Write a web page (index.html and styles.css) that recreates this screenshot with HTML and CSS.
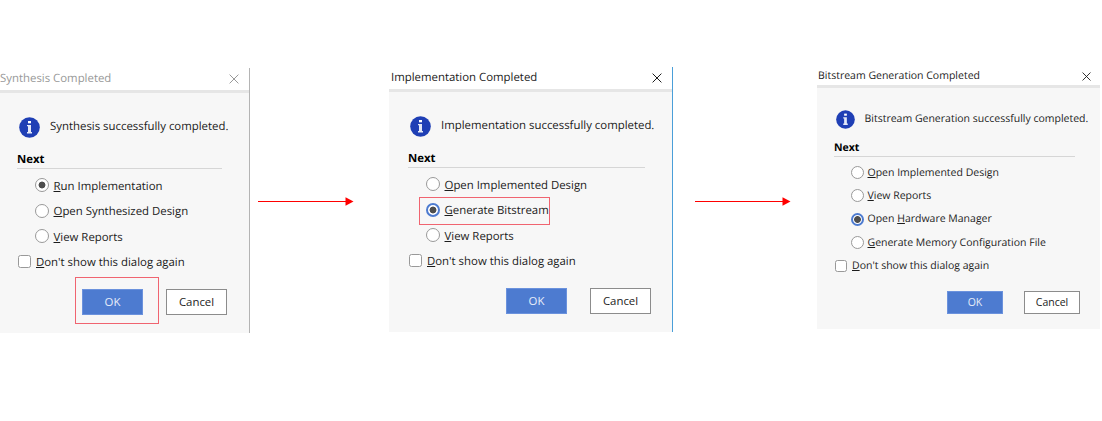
FILE: index.html
```html
<!DOCTYPE html>
<html lang="en">
<head>
<meta charset="utf-8">
<title>Vivado flow dialogs</title>
<link rel="stylesheet" href="styles.css">
</head>
<body>
<svg width="0" height="0" class="defs">
  <symbol id="info" viewBox="0 0 21 21"><circle cx="10.5" cy="10.5" r="10.3" fill="#1f3fb5"/><rect x="9" y="4" width="3" height="2.3" fill="#fff"/><path d="M8 8h4v7h1v1.500H8V15H9V9.300H8z" fill="#e4e9f8"/></symbol>
  <symbol id="close" viewBox="0 0 10 10"><path d="M.6.6l8.800 8.800M9.400.6L.6 9.400" fill="none" stroke="currentColor" stroke-width="1"/></symbol>
  <symbol id="arrow" viewBox="0 0 96 10"><path d="M0 5.500h89" stroke="#f00" stroke-width="1"/><path d="M87.500 1.300L95.500 5.500L87.500 9.700z" fill="#f00"/></symbol>
</svg>
<main class="stage">
  <section class="dialog synthesis">
    <header class="titlebar"><span>Synthesis Completed</span><svg class="close"><use href="#close"/></svg></header>
    <div class="body">
      <div class="message"><svg class="info"><use href="#info"/></svg><span>Synthesis successfully completed.</span></div>
      <h2 class="next">Next</h2>
      <div class="options">
        <label class="option"><i class="radio checked"></i><span><u>R</u>un Implementation</span></label>
        <label class="option"><i class="radio"></i><span><u>O</u>pen Synthesized Design</span></label>
        <label class="option"><i class="radio"></i><span><u>V</u>iew Reports</span></label>
      </div>
      <label class="again"><i class="checkbox"></i><span><u>D</u>on't show this dialog again</span></label>
      <div class="buttons"><button class="ok">OK<span class="mark mark-ok"></span></button><button class="cancel">Cancel</button></div>
    </div>
  </section>
  <svg class="arrow first"><use href="#arrow"/></svg>
  <section class="dialog implementation">
    <header class="titlebar"><span>Implementation Completed</span><svg class="close"><use href="#close"/></svg></header>
    <div class="body">
      <div class="message"><svg class="info"><use href="#info"/></svg><span>Implementation successfully completed.</span></div>
      <h2 class="next">Next</h2>
      <div class="options">
        <label class="option"><i class="radio"></i><span><u>O</u>pen Implemented Design</span></label>
        <label class="option"><i class="radio checked focus"></i><span><u>G</u>enerate Bitstream</span><span class="mark mark-option"></span></label>
        <label class="option"><i class="radio"></i><span><u>V</u>iew Reports</span></label>
      </div>
      <label class="again"><i class="checkbox"></i><span><u>D</u>on't show this dialog again</span></label>
      <div class="buttons"><button class="ok">OK</button><button class="cancel">Cancel</button></div>
    </div>
  </section>
  <svg class="arrow second"><use href="#arrow"/></svg>
  <section class="dialog bitstream">
    <header class="titlebar"><span>Bitstream Generation Completed</span><svg class="close"><use href="#close"/></svg></header>
    <div class="body">
      <div class="message"><svg class="info"><use href="#info"/></svg><span>Bitstream Generation successfully completed.</span></div>
      <h2 class="next">Next</h2>
      <div class="options">
        <label class="option"><i class="radio"></i><span><u>O</u>pen Implemented Design</span></label>
        <label class="option"><i class="radio"></i><span><u>V</u>iew Reports</span></label>
        <label class="option"><i class="radio checked focus"></i><span>Open <u>H</u>ardware Manager</span></label>
        <label class="option"><i class="radio"></i><span><u>G</u>enerate Memory Configuration File</span></label>
      </div>
      <label class="again"><i class="checkbox"></i><span><u>D</u>on't show this dialog again</span></label>
      <div class="buttons"><button class="ok">OK</button><button class="cancel">Cancel</button></div>
    </div>
  </section>
</main>
</body>
</html>
```
FILE: styles.css
```css
* { box-sizing: border-box; }
body { margin: 0; background: #fff; overflow: hidden; }
.defs { display: block; }
.stage { display: flex; align-items: flex-start; height: 421px; padding-top: 67px; }

.dialog {
  --row: 25.5px;
  --radio: 14px;
  flex: none;
  height: 265px;
  font: 11.4px/1 "Open Sans", "Noto Sans", sans-serif;
  font-stretch: 90%;
  text-rendering: geometricPrecision;
  color: #1c1c1c;
  background: #f7f7f7;
}
.synthesis { width: 250px; margin-top: 1px; border-right: 1px solid #b4b4b4; }
.implementation { width: 284px; border-right: 1px solid #4a9fd9; }
.bitstream { --row: 23.3px; --radio: 13px; width: 283px; height: 262px; font-size: 10.5px; }

.titlebar {
  display: flex;
  align-items: center;
  justify-content: space-between;
  height: 25px;
  padding: 0 10px 0 2px;
  background: #fff;
  border-bottom: 3px solid #e6e6e6;
}
.synthesis .titlebar { padding-left: 0; color: #999; }
.bitstream .titlebar { height: 21px; padding: 0 9px 3px 1px; }
.bitstream .titlebar { padding-bottom: 0; }
.close { width: 10px; height: 10px; }
.bitstream .close { width: 9px; height: 9px; }

.body { padding: 23px 0 0 17px; }
.implementation .body { padding-left: 19px; }
.bitstream .body { padding-top: 21px; }

.message { display: flex; align-items: center; gap: 10px; height: 22px; padding-left: 2px; white-space: nowrap; }
.info { width: 21px; height: 21px; flex: none; }
.bitstream .message { height: 20px; gap: 9.5px; padding-left: 2px; }
.bitstream .info { width: 19px; height: 19px; }

.next {
  width: 205px;
  height: 20px;
  margin: 11px 0 3.5px;
  padding-top: 4.500px;
  border-bottom: 1px solid #d6d6d6;
  font-size: 11.4px;
  line-height: 1;
  font-weight: 700;
  color: #000;
}
.implementation .next { width: 237px; }
.bitstream .next { width: 241px; height: 18px; margin: 10px 0 4px; padding-top: 4px; font-size: 10.5px; }

.option, .again { position: relative; display: flex; align-items: center; height: var(--row); white-space: nowrap; }
.option { gap: 4.500px; padding-left: 18px; }
.again { gap: 5px; padding-left: 1px; }
.option span, .again span { padding-top: 2px; }
.bitstream .option { gap: 3.500px; padding-left: 17px; }
.bitstream .option span, .bitstream .again span { padding-top: 1px; }

u { text-decoration: underline; text-decoration-thickness: 1px; text-underline-offset: 1px; }

.radio { width: var(--radio); height: var(--radio); flex: none; border: 1px solid #999; border-radius: 50%; background: #fff; }
.radio.checked { background: radial-gradient(circle, #4d4d4d 0 3px, #fff 3.8px); }
.radio.focus { border: 2px solid #4d7bd0; }
.checkbox { width: 13px; height: 13px; flex: none; border: 1px solid #999; border-radius: 2.5px; background: #fff; }
.bitstream .checkbox { width: 12px; height: 12px; }

.buttons { display: flex; gap: 23px; margin: 14.5px 0 0 65px; }
.implementation .buttons { margin-left: 98px; }
.bitstream .buttons { gap: 21px; margin: 13.500px 0 0 113px; }
button { position: relative; width: 61px; height: 26px; padding: 0; font: inherit; color: #1c1c1c; background: #fff; border: 1px solid #8c8c8c; }
.bitstream button { width: 56px; height: 23px; }
.ok { color: #e6edf9; background: #4d7bd0; border-color: #6b92dd; }

/* Red highlight frames drawn over the dialogs */
.mark { position: absolute; border: 1px solid #f06470; }
.mark-ok { left: -8px; top: -13px; width: 84px; height: 47px; }
.mark-option { left: 11px; top: 0; width: 131px; height: 28px; }

.arrow { flex: none; width: 96px; height: 10px; margin-top: 129px; }
.arrow.first { margin-left: 8px; margin-right: 35px; }
.arrow.second { margin-left: 22px; margin-right: 26px; }
```
